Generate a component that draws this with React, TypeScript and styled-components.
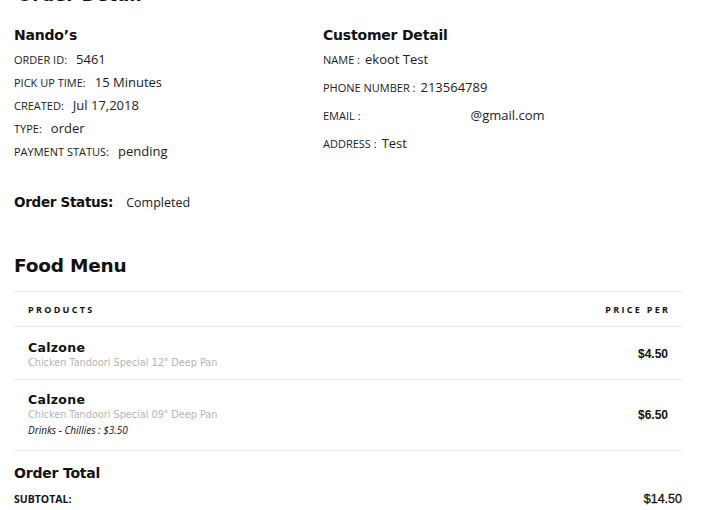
import React from "react";
import styled, { createGlobalStyle } from "styled-components";

const Global = createGlobalStyle`
  html, body { margin: 0; padding: 0; background: #fff; }
  body { font-family: "Open Sans", "Liberation Sans", sans-serif; color: #111; }
`;

const Page = styled.div`
  padding: 0 19px 0 14px;
  margin-top: -15px;
`;

const PageTitle = styled.h1`
  margin: 0 0 0 3px;
  font-family: "DejaVu Sans", sans-serif;
  font-weight: 700;
  font-size: 18px;
  line-height: 20px;
  color: #111;
`;

const DetailGrid = styled.div`
  display: grid;
  grid-template-columns: 309px 1fr;
  margin-top: 20px;
`;

const Column = styled.div`
  display: flex;
  flex-direction: column;
`;

const SectionTitle = styled.h2<{ $size?: number }>`
  margin: 0;
  font-family: "DejaVu Sans", sans-serif;
  font-weight: 700;
  font-size: ${(p) => p.$size ?? 14}px;
  line-height: 20px;
  color: #111;
  letter-spacing: -0.2px;
`;

const InfoList = styled.div<{ $gap: number }>`
  display: flex;
  flex-direction: column;
  gap: ${(p) => p.$gap}px;
  margin-top: 5px;
`;

const InfoRow = styled.div`
  display: flex;
  align-items: baseline;
  height: 18px;
  line-height: 18px;
`;

const Label = styled.span<{ $space?: number }>`
  font-size: 11px;
  text-transform: uppercase;
  color: #222;
  margin-right: ${(p) => p.$space ?? 8}px;
`;

const Value = styled.span`
  font-size: 13px;
  color: #222;
`;

const StatusRow = styled.div`
  display: flex;
  align-items: baseline;
  margin-top: 32px;
`;

const StatusTitle = styled(SectionTitle)`
  font-size: 13.5px;
  letter-spacing: -0.3px;
`;

const StatusValue = styled.span`
  font-size: 12.5px;
  color: #222;
  margin-left: 13px;
`;

const MenuTitle = styled(SectionTitle)`
  margin-top: 44px;
  font-size: 18.5px;
`;

const Table = styled.div`
  margin-top: 15px;
  border-top: 1px solid #e8e8e8;
`;

const HeadRow = styled.div`
  display: flex;
  justify-content: space-between;
  align-items: center;
  height: 34px;
  padding: 0 14px;
  border-bottom: 1px solid #e8e8e8;
`;

const HeadCell = styled.span`
  font-size: 9px;
  font-weight: 700;
  letter-spacing: 2.3px;
  color: #111;
  margin-right: -2.3px;
`;

const ItemRow = styled.div<{ $height: number; $top: number }>`
  display: flex;
  justify-content: space-between;
  align-items: center;
  height: ${(p) => p.$height}px;
  padding: ${(p) => p.$top}px 14px 0;
  border-bottom: 1px solid #e8e8e8;
  box-sizing: border-box;
`;

const ItemInfo = styled.div`
  display: flex;
  flex-direction: column;
`;

const ItemName = styled.span`
  font-family: "DejaVu Sans", sans-serif;
  font-weight: 700;
  font-size: 12.5px;
  line-height: 16px;
  letter-spacing: 0.3px;
  color: #111;
`;

const ItemDesc = styled.span`
  font-family: "DejaVu Sans", sans-serif;
  font-size: 9.7px;
  line-height: 14px;
  color: #b4b4b4;
`;

const ItemExtra = styled.span`
  font-size: 10px;
  font-style: italic;
  line-height: 16px;
  color: #111;
`;

const Price = styled.span`
  font-family: "Liberation Sans", Arial, sans-serif;
  font-weight: 700;
  font-size: 12px;
  color: #111;
`;

const PriceCell = styled.div<{ $shift: number }>`
  display: flex;
  align-items: center;
  margin-top: ${(p) => p.$shift}px;
`;

const TotalTitle = styled(SectionTitle)`
  margin-top: 12px;
`;

const SubtotalRow = styled.div`
  display: flex;
  justify-content: space-between;
  align-items: baseline;
  margin-top: 9px;
`;

const SubtotalLabel = styled.span`
  font-size: 10.5px;
  font-weight: 700;
  color: #111;
`;

const SubtotalValue = styled(Price)`
  font-weight: 400;
  font-size: 12.5px;
  -webkit-text-stroke: 0.3px #111;
`;

const orderInfo = [
  { label: "Order ID:", value: "5461", space: 9 },
  { label: "Pick up time:", value: "15 Minutes", space: 9 },
  { label: "Created:", value: "Jul 17,2018", space: 9 },
  { label: "Type:", value: "order", space: 9 },
  { label: "Payment Status:", value: "pending", space: 9 },
];

const customerInfo = [
  { label: "Name :", value: "ekoot Test", space: 5 },
  { label: "Phone Number :", value: "213564789", space: 5 },
  { label: "Email :", value: "@gmail.com", space: 110 },
  { label: "Address :", value: "Test", space: 5 },
];

const items = [
  {
    name: "Calzone",
    desc: "Chicken Tandoori Special 12\" Deep Pan",
    price: "$4.50",
    height: 53,
    top: 4,
    shift: -3,
  },
  {
    name: "Calzone",
    desc: "Chicken Tandoori Special 09\" Deep Pan",
    extra: "Drinks - Chillies : $3.50",
    price: "$6.50",
    height: 71,
    top: 0,
    shift: 0,
  },
];

export default function App() {
  return (
    <>
      <Global />
      <Page>
        <PageTitle>Order Detail</PageTitle>
        <DetailGrid>
          <Column>
            <SectionTitle>Nando’s</SectionTitle>
            <InfoList $gap={5}>
              {orderInfo.map((r) => (
                <InfoRow key={r.label}>
                  <Label $space={r.space}>{r.label}</Label>
                  <Value>{r.value}</Value>
                </InfoRow>
              ))}
            </InfoList>
          </Column>
          <Column>
            <SectionTitle>Customer Detail</SectionTitle>
            <InfoList $gap={10}>
              {customerInfo.map((r) => (
                <InfoRow key={r.label}>
                  <Label $space={r.space}>{r.label}</Label>
                  <Value>{r.value}</Value>
                </InfoRow>
              ))}
            </InfoList>
          </Column>
        </DetailGrid>
        <StatusRow>
          <StatusTitle>Order Status:</StatusTitle>
          <StatusValue>Completed</StatusValue>
        </StatusRow>
        <MenuTitle>Food Menu</MenuTitle>
        <Table>
          <HeadRow>
            <HeadCell>PRODUCTS</HeadCell>
            <HeadCell>PRICE PER</HeadCell>
          </HeadRow>
          {items.map((it, i) => (
            <ItemRow key={i} $height={it.height} $top={it.top}>
              <ItemInfo>
                <ItemName>{it.name}</ItemName>
                <ItemDesc>{it.desc}</ItemDesc>
                {it.extra && <ItemExtra>{it.extra}</ItemExtra>}
              </ItemInfo>
              <PriceCell $shift={it.shift}>
                <Price>{it.price}</Price>
              </PriceCell>
            </ItemRow>
          ))}
        </Table>
        <TotalTitle>Order Total</TotalTitle>
        <SubtotalRow>
          <SubtotalLabel>SUBTOTAL:</SubtotalLabel>
          <SubtotalValue>$14.50</SubtotalValue>
        </SubtotalRow>
      </Page>
    </>
  );
}
